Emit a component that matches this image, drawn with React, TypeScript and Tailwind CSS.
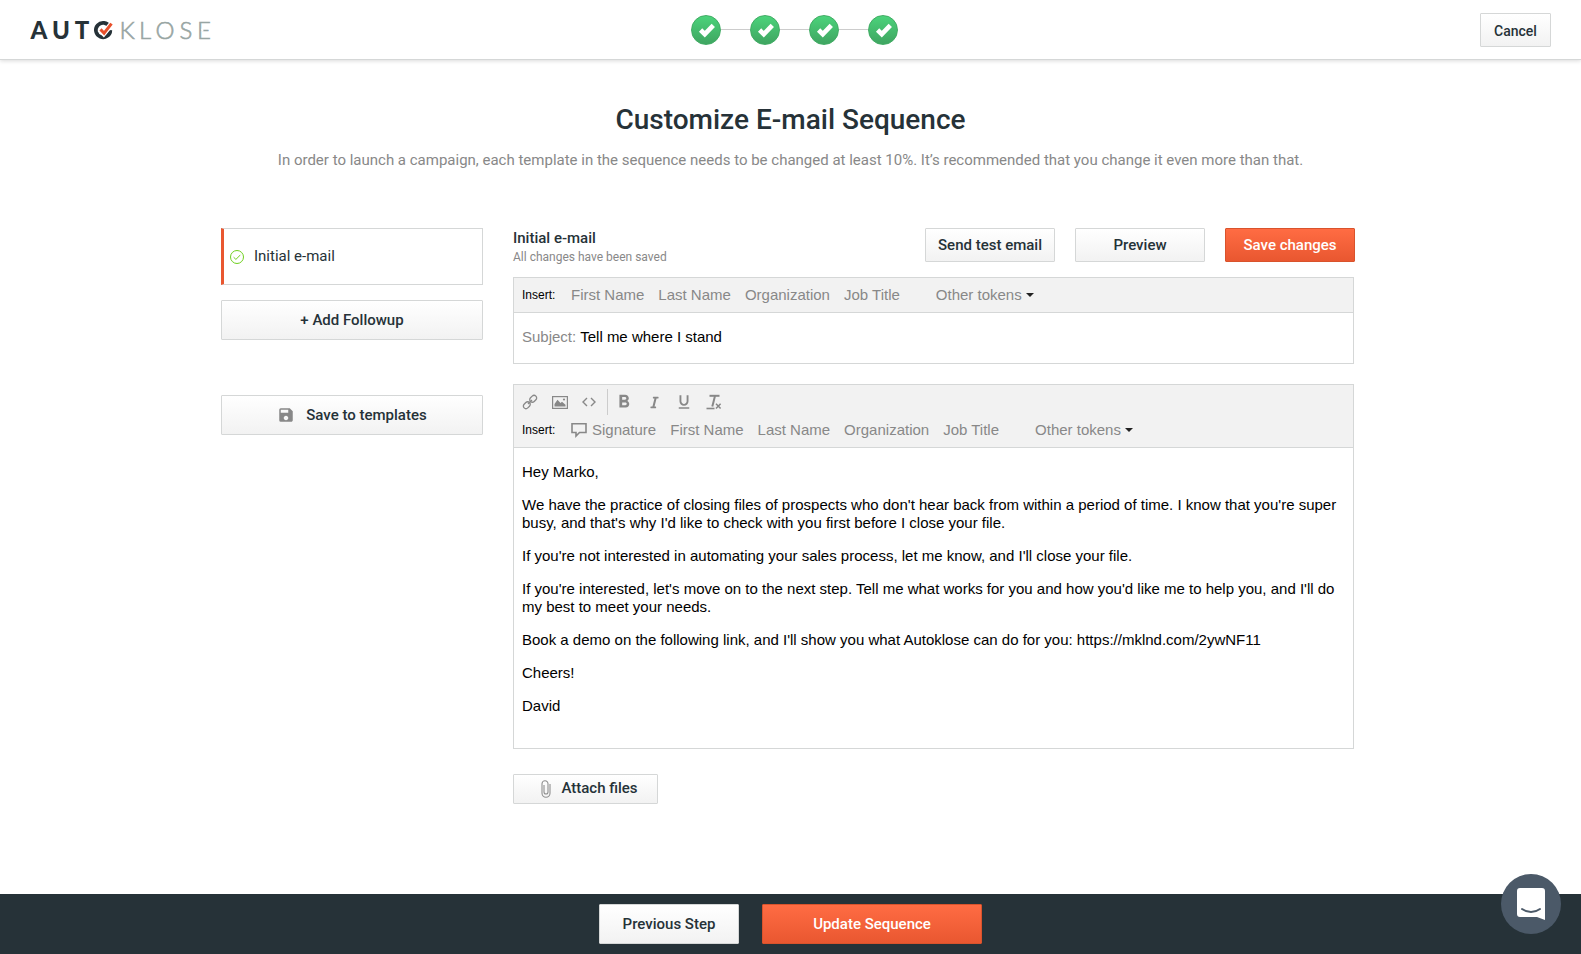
import React, { useState } from "react";
import { FaItalic } from "react-icons/fa";
import { MdFormatBold, MdFormatUnderlined, MdSave } from "react-icons/md";
import { twMerge } from "tailwind-merge";

const tokens = ["First Name", "Last Name", "Organization", "Job Title"];

const paragraphs = [
  "Hey Marko,",
  "We have the practice of closing files of prospects who don't hear back from within a period of time. I know that you're super busy, and that's why I'd like to check with you first before I close your file.",
  "If you're not interested in automating your sales process, let me know, and I'll close your file.",
  "If you're interested, let's move on to the next step. Tell me what works for you and how you'd like me to help you, and I'll do my best to meet your needs.",
  "Book a demo on the following link, and I'll show you what Autoklose can do for you: https://mklnd.com/2ywNF11",
  "Cheers!",
  "David",
];

const Logo = () => (
  <svg width="188" height="36" viewBox="0 -8 188 36" role="img" aria-label="Autoklose">
    <g fontFamily="Lato, sans-serif" fontSize="24" fontWeight="900" fill="#263238" textAnchor="middle">
      <text x="9" y="19">A</text>
      <text x="31" y="19">U</text>
      <text x="52" y="19">T</text>
    </g>
    <path d="M79.5 6.7A7.2 7.2 0 1 0 80.3 10.1" fill="none" stroke="#263238" strokeWidth="3.8" />
    <path d="M69.5 9.2l4.2 4.3 8.6-10.5" fill="none" stroke="#fff" strokeWidth="5.5" />
    <path d="M70.5 9.4l3.6 3.8 7.4-9.6" fill="none" stroke="#e8502b" strokeWidth="3" />
    <g
      fontFamily="Lato, sans-serif"
      fontSize="24"
      fontWeight="300"
      fill="#98a5a3"
      stroke="#98a5a3"
      strokeWidth=".6"
      textAnchor="middle"
    >
      <text x="97" y="19">K</text>
      <text x="115" y="19">L</text>
      <text x="135" y="19">O</text>
      <text x="156" y="19">S</text>
      <text x="174" y="19">E</text>
    </g>
    <path d="M171.2 10.2h2.2" stroke="#fff" strokeWidth="3" />
  </svg>
);

const StepCheck = () => (
  <svg width="28" height="28" viewBox="1 1 28 28" fill="none" stroke="#fff" strokeWidth="4.6">
    <path d="M9.600 15l4.200 4.200L22.300 10.400" />
  </svg>
);

const LinkIcon = () => (
  <svg width="16" height="16" viewBox="0 0 16 16" fill="none" stroke="#888" strokeWidth="1.3">
    <rect x="-3.8" y="-2.6" width="7.6" height="5.2" rx="2.6" transform="translate(11.2 4.8) rotate(-45)" />
    <rect x="-3.8" y="-2.6" width="7.6" height="5.2" rx="2.6" transform="translate(4.8 11.2) rotate(-45)" />
    <path d="M6 10l4-4" />
  </svg>
);

const ImageIcon = () => (
  <svg width="16" height="16" viewBox="0 0 16 16">
    <rect x=".6" y="2.6" width="14.8" height="11.8" fill="none" stroke="#888" strokeWidth="1.2" />
    <path d="M2.5 12.5V10l3-4.2 3 3.2L10 7.800l3.500 3v1.700z" fill="#888" />
    <circle cx="12" cy="5.5" r="1.1" fill="#888" />
  </svg>
);

const CodeIcon = () => (
  <svg width="14" height="16" viewBox="0 0 14 16" fill="none" stroke="#888" strokeWidth="1.4">
    <path d="M5 4L1 8l4 4M9 4l4 4-4 4" />
  </svg>
);

const ClearFormatIcon = () => (
  <svg width="16" height="16" viewBox="0 0 16 16" fill="none" stroke="#888">
    <path d="M3.5 1.8h10" strokeWidth="2" />
    <path d="M9 2L6.300 12.500" strokeWidth="2" />
    <path d="M.5 14.5h8" strokeWidth="1.6" />
    <path d="M10 9.800l4.600 4.800M14.600 9.800L10 14.600" strokeWidth="1.5" />
  </svg>
);

const SignatureIcon = () => (
  <svg width="16" height="16" viewBox="0 0 16 16" fill="none" stroke="#888" strokeWidth="1.6">
    <path d="M1 1.800h14v8.700H8.500L5 14v-3.500H1z" />
  </svg>
);

const PaperclipIcon = () => (
  <svg width="10" height="18" viewBox="0 0 10 18" fill="none" stroke="#8f8f8f" strokeWidth="1.1">
    <path d="M9 4v9.200a4 4 0 0 1-8 0V3.800a3 3 0 0 1 6 0V12a2 2 0 0 1-4 0V5" />
  </svg>
);

const CheckCircle = () => (
  <svg width="14" height="14" viewBox="0 0 14 14" fill="none" stroke="#6fcf1f">
    <circle cx="7" cy="7" r="6.5" />
    <path d="M3.600 7.200l2.300 2.200 4.600-4.600" />
  </svg>
);

type ButtonProps = {
  children: React.ReactNode;
  primary?: boolean;
  className?: string;
};

const Button = ({ children, primary, className }: ButtonProps) => (
  <button
    type="button"
    className={twMerge(
      "flex items-center justify-center rounded-[1px] border bg-linear-to-b text-[15px] font-medium",
      primary
        ? "border-[#d9532c] from-[#ff6c43] to-[#e95730] text-white"
        : "border-[#d5d7d7] from-white to-[#f2f2f2] text-[#263238]",
      className
    )}
  >
    {children}
  </button>
);

const TokenBar = ({ id, signature }: { id: string; signature?: boolean }) => (
  <div className="flex items-center gap-[14px] text-[15px] text-[#888]">
    <span className="w-[35px] text-xs text-black">Insert:</span>
    {signature && (
      <button type="button" className="flex items-center gap-[5px]">
        <SignatureIcon />
        Signature
      </button>
    )}
    {tokens.map((token) => (
      <button type="button" key={token}>
        {token}
      </button>
    ))}
    <div className="ml-[22px] flex items-center gap-1">
      <select id={id} aria-label="Other tokens" className="appearance-none bg-transparent">
        <option>Other tokens</option>
      </select>
      <svg width="8" height="4" viewBox="0 0 8 4" className="pointer-events-none">
        <path d="M0 0h8L4 4z" fill="#222" />
      </svg>
    </div>
  </div>
);

const App = () => {
  const [subject, setSubject] = useState("Tell me where I stand");

  return (
    <div className="flex min-h-screen flex-col bg-white font-['Roboto',sans-serif] text-[#263238]">
      <header className="grid h-[60px] grid-cols-[1fr_auto_1fr] items-center border-b border-[#d5d7d7] px-[30px] shadow-[0_1px_4px_rgba(0,0,0,0.15)]">
        <a href="#">
          <Logo />
        </a>
        <ol className="ml-2 flex items-center">
          {[1, 2, 3, 4].map((step) => (
            <li key={step} className="flex items-center">
              {step > 1 && <span className="h-px w-[29px] bg-[#ccc]" />}
              <span className="flex size-[30px] items-center justify-center rounded-full border border-[#41ac64] bg-linear-to-b from-[#4bd37b] to-[#3fa561]">
                <StepCheck />
              </span>
            </li>
          ))}
        </ol>
        <Button className="h-[34px] w-[71px] justify-self-end pt-[2px] text-sm">Cancel</Button>
      </header>

      <main className="grow pb-10">
        <div className="mt-[41px] text-center">
          <h1 className="text-[28px] leading-[38px] font-medium">Customize E-mail Sequence</h1>
          <p className="mt-[11px] text-[15px] leading-5 text-[#888]">
            In order to launch a campaign, each template in the sequence needs to be changed at least 10%. It’s
            recommended that you change it even more than that.
          </p>
        </div>

        <div className="mx-auto mt-[58px] flex max-w-[1139px] gap-[30px] pr-[5px]">
          <aside className="w-[262px] shrink-0">
            <a
              href="#"
              className="flex h-[57px] items-center gap-[10px] border border-l-3 border-[#d5d7d7] border-l-[#e95730] pl-[6px] text-[15px]"
            >
              <CheckCircle />
              Initial e-mail
            </a>
            <Button className="mt-[15px] h-10 w-full">+ Add Followup</Button>
            <Button className="mt-[55px] h-10 w-full gap-[11px]">
              <MdSave size={18} color="#888" />
              Save to templates
            </Button>
          </aside>

          <section className="min-w-0 grow">
            <div className="flex items-start justify-between">
              <div>
                <h2 className="text-[15px] leading-5 font-medium">Initial e-mail</h2>
                <p className="text-xs leading-[18px] text-[#888]">All changes have been saved</p>
              </div>
              <div className="flex gap-5">
                <Button className="h-[34px] w-[130px]">Send test email</Button>
                <Button className="h-[34px] w-[130px]">Preview</Button>
                <Button primary className="h-[34px] w-[130px]">
                  Save changes
                </Button>
              </div>
            </div>

            <div className="mt-[11px] mr-px border border-[#d5d7d7] font-['Liberation_Sans',sans-serif]">
              <div className="flex h-[35px] items-center border-b border-[#d5d7d7] bg-[#f2f2f2] px-2">
                <TokenBar id="subject-tokens" />
              </div>
              <div className="flex h-[50px] items-center gap-1 px-2 pb-[2px] text-[15px]">
                <label htmlFor="subject" className="text-[#888]">
                  Subject:
                </label>
                <input
                  id="subject"
                  type="text"
                  value={subject}
                  onChange={(e) => setSubject(e.target.value)}
                  className="grow text-black outline-none"
                />
              </div>
            </div>

            <div className="mt-5 mr-px border border-[#d5d7d7] font-['Liberation_Sans',sans-serif]">
              <div className="border-b border-[#d5d7d7] bg-[#f2f2f2] px-2 pt-1 pb-[5px]">
                <div className="flex h-[26px] items-center gap-[11px] text-[#888]">
                  <div className="flex items-center gap-[14px]">
                    <button type="button" aria-label="Insert link">
                      <LinkIcon />
                    </button>
                    <button type="button" aria-label="Insert image">
                      <ImageIcon />
                    </button>
                    <button type="button" aria-label="Code view">
                      <CodeIcon />
                    </button>
                  </div>
                  <div className="flex items-center gap-2 border-l border-[#ccc] pl-[5px]">
                    <button type="button" aria-label="Bold" className="flex h-[26px] w-[22px] items-center justify-center">
                      <MdFormatBold size={22} />
                    </button>
                    <button type="button" aria-label="Italic" className="flex w-[22px] justify-center">
                      <FaItalic size={13} />
                    </button>
                    <button type="button" aria-label="Underline" className="flex w-[22px] justify-center">
                      <MdFormatUnderlined size={18} />
                    </button>
                    <button type="button" aria-label="Clear formatting" className="flex w-[22px] justify-center">
                      <ClearFormatIcon />
                    </button>
                  </div>
                </div>
                <div className="mt-1">
                  <TokenBar id="body-tokens" signature />
                </div>
              </div>
              <div
                contentEditable
                suppressContentEditableWarning
                role="textbox"
                aria-label="E-mail body"
                className="min-h-[300px] space-y-[15px] px-2 py-[15px] text-[15px] leading-[18px] text-black outline-none"
              >
                {paragraphs.map((text) => (
                  <p key={text}>{text}</p>
                ))}
              </div>
            </div>

            <Button className="mt-[25px] h-[30px] w-[145px] gap-[10px] pl-2">
              <PaperclipIcon />
              Attach files
            </Button>
          </section>
        </div>
      </main>

      <footer className="flex h-[60px] items-center justify-center gap-[23px] bg-[#263238]">
        <Button className="h-10 w-[140px]">Previous Step</Button>
        <Button primary className="h-10 w-[220px]">
          Update Sequence
        </Button>
      </footer>

      <button
        type="button"
        aria-label="Open chat"
        className="fixed right-5 bottom-5 flex size-[60px] items-center justify-center rounded-full bg-[#4b5968]"
      >
        <svg width="28" height="32" viewBox="0 0 28 32">
          <path d="M3 0h22a3 3 0 0 1 3 3v29l-8-3H3a3 3 0 0 1-3-3V3a3 3 0 0 1 3-3z" fill="#fff" />
          <path d="M5 21c5.500 4 12.500 4 18 0" fill="none" stroke="#4b5968" strokeWidth="2" strokeLinecap="round" />
        </svg>
      </button>
    </div>
  );
};

export default App;
